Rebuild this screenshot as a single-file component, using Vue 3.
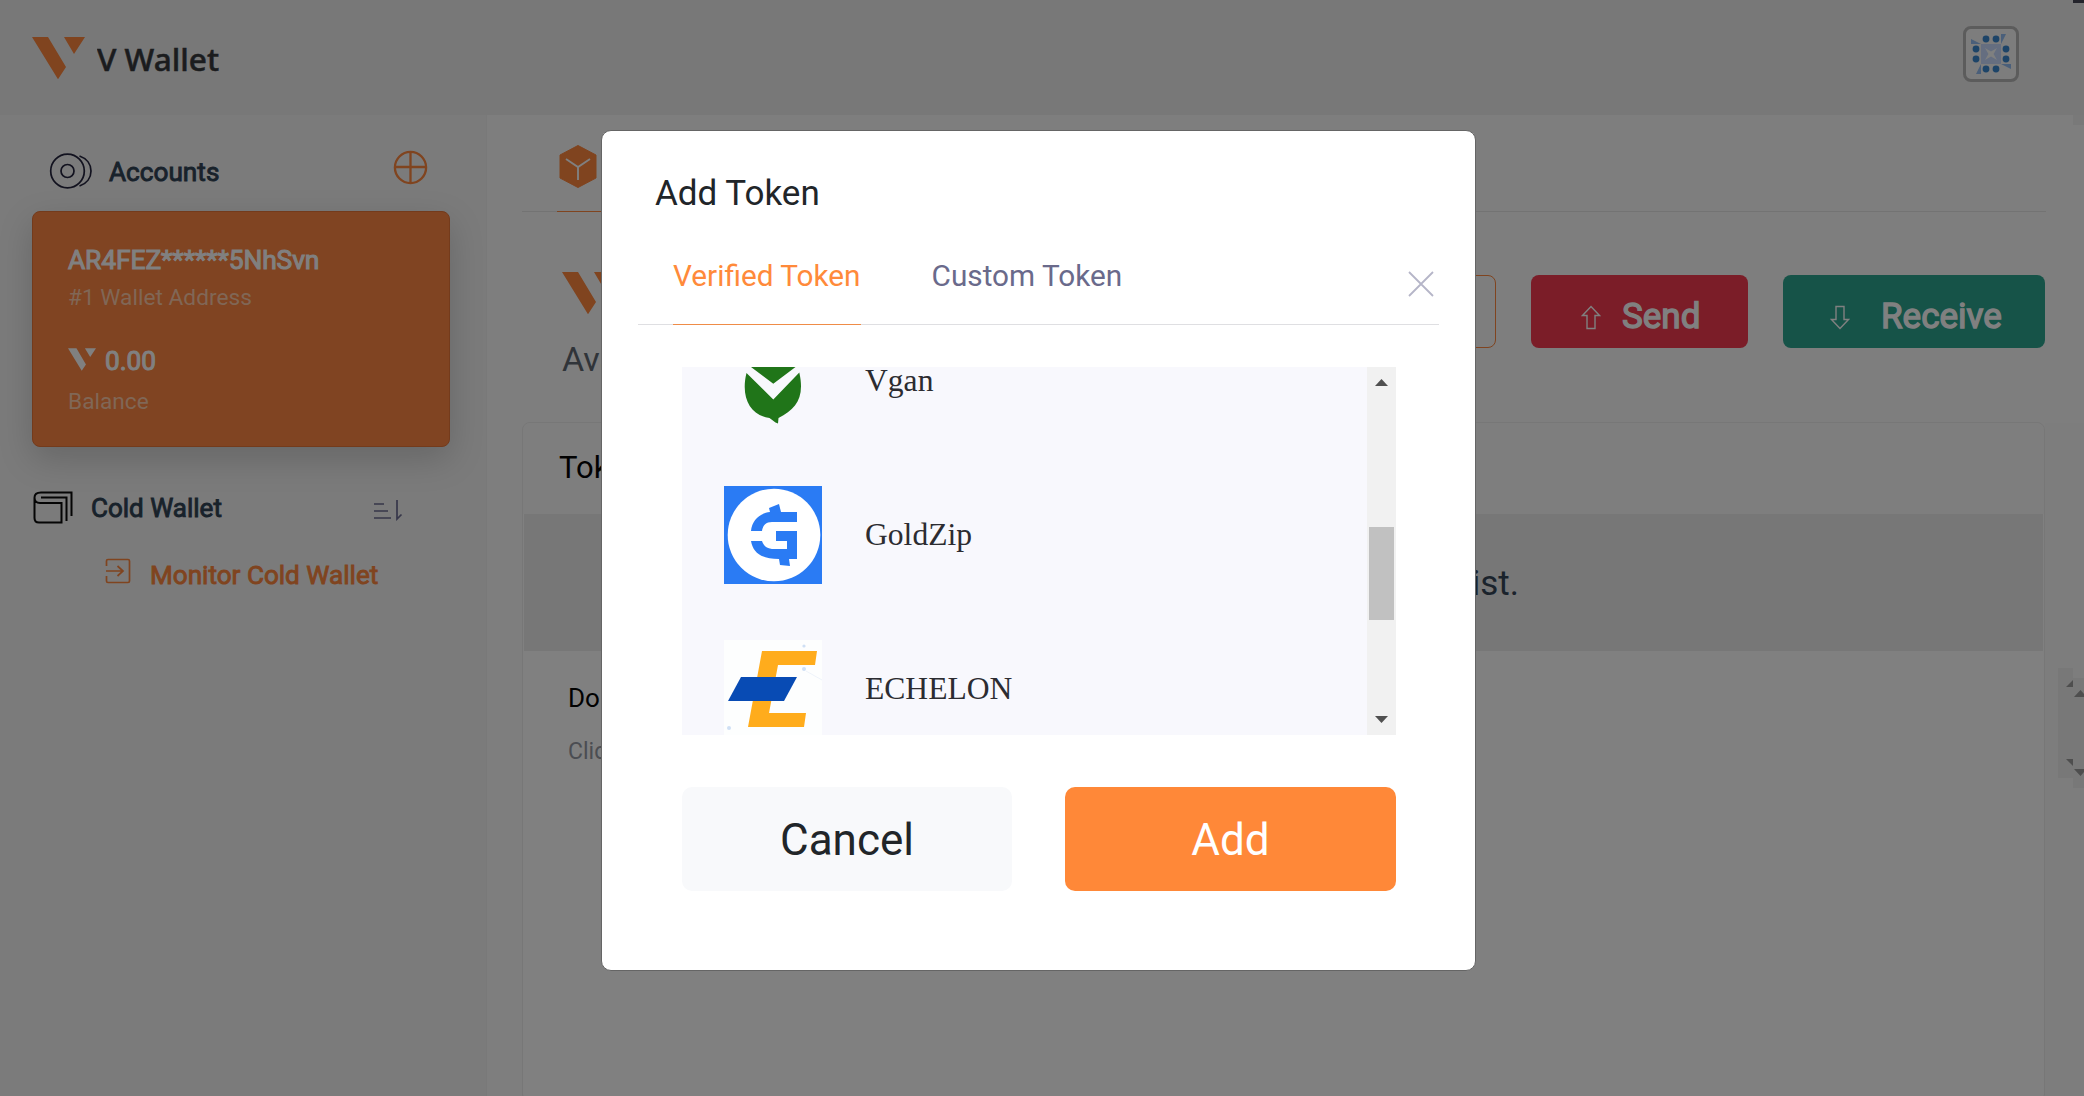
<template>
  <div class="screen">
    <header class="top">
      <div class="brand">
        <svg width="53" height="43" viewBox="0 0 53 43" fill="#80441f"><path d="M0 0H16L34 30L26 42.3ZM32 0H53L42 17Z" /></svg>
        <svg class="wordmark" width="140" height="46"><text x="0" y="34" textLength="122" lengthAdjust="spacingAndGlyphs">V Wallet</text></svg>
      </div>
      <div class="avatar">
        <svg width="40" height="40" viewBox="0 0 40 40">
          <rect x="10" y="10" width="20" height="20" fill="#656e80" />
          <path d="M14 14L20 17.4L26 14L22.6 20L26 26L20 22.6L14 26L17.4 20Z" fill="#7f8080" />
          <g fill="#1d4468">
            <circle v-for="(d, i) in dots" :key="i" :cx="d[0]" :cy="d[1]" r="3.4" />
          </g>
          <path d="M0 5L10 10H0ZM30 0H35L30 10ZM30 30H40V35ZM10 30V40H5Z" fill="#4a5f7a" />
        </svg>
      </div>
    </header>

    <div class="body">
      <aside class="side">
        <div class="accounts">
          <svg class="coin" width="44" height="37" viewBox="0 0 44 37" fill="none" stroke="#12121f" stroke-width="1.7">
            <circle cx="18.5" cy="18" r="16.8" /><circle cx="18.5" cy="18" r="6.5" />
            <path d="M30.5 3C38 5.5 42 11.5 42 18S38 30.5 30.5 33" />
          </svg>
          <span class="label">Accounts</span>
          <svg class="plus" width="35" height="35" viewBox="0 0 35 35" fill="none" stroke="#80441f" stroke-width="2.3"><circle cx="17.5" cy="17.5" r="15.6" /><path d="M17.5 2V33M2 17H33" /></svg>
        </div>
        <section class="card">
          <div class="address">AR4FEZ******5NhSvn</div>
          <div class="muted">#1 Wallet Address</div>
          <div class="amount">
            <svg width="28" height="23" viewBox="0 0 53 43" fill="#808080"><path d="M0 0H16L34 31L26 43ZM32 0H53L42 17Z" /></svg>
            <span>0.00</span>
          </div>
          <div class="muted bal">Balance</div>
        </section>
        <div class="cold">
          <svg width="40" height="34" viewBox="0 0 40 34" fill="none" stroke="#050505" stroke-width="2">
            <path d="M1.5 7V27Q1.5 31.5 6 31.5H28.5V12H7Q1.5 12 1.5 6.5Q1.5 1.5 8 1.5H38.5V25M33.5 30V6.5H8" />
          </svg>
          <span class="label">Cold Wallet</span>
          <svg class="sort" width="30" height="22" viewBox="0 0 30 22" fill="none" stroke="#37374a" stroke-width="1.7"><path d="M1 5H11M1 12H15M1 19H18M24 1V20L28.5 15.5" /></svg>
        </div>
        <div class="monitor">
          <svg width="26" height="26" viewBox="0 0 26 26" fill="none" stroke="#80441f" stroke-width="1.7"><path d="M1.5 8V3Q1.5 1.5 3 1.5H23Q24.5 1.5 24.5 3V23Q24.5 24.5 23 24.5H3Q1.5 24.5 1.5 23V18M1 13H18M12.5 8L18 13L12.5 18" /></svg>
          <span>Monitor Cold Wallet</span>
        </div>
      </aside>

      <main class="main">
        <div class="tabs">
          <div class="tab">
            <svg width="38" height="43" viewBox="0 0 38 43"><path d="M19 .5L37 10V33L19 42.5L1 33V10Z" fill="#80441f" stroke="#80441f" stroke-linejoin="round" /><path d="M7 14L19 22L31 14M19 22V35" fill="none" stroke="#808080" stroke-width="1.9" /></svg>
          </div>
        </div>
        <div class="summary">
          <div>
            <svg class="big-v" width="53" height="43" viewBox="0 0 53 43" fill="#80441f"><path d="M0 0H16L34 30L26 42.3ZM32 0H53L42 17Z" /></svg>
            <div class="available">Available</div>
          </div>
          <div class="actions">
            <div class="ghost"></div>
            <div class="action send"><svg width="20" height="25" viewBox="0 0 20 25"><path d="M10 1.5L18.5 10.5H14V23.5H6V10.5H1.5Z" /></svg><span>Send</span></div>
            <div class="action receive"><svg width="20" height="25" viewBox="0 0 20 25"><path d="M10 23.5L1.5 14.5H6V1.5H14V14.5H18.5Z" /></svg><span>Receive</span></div>
          </div>
        </div>
        <section class="tokens">
          <div class="tokens-head">Tokens</div>
          <div class="empty"><span>No tokens in the list.</span></div>
          <div class="hint">Don't see your token?</div>
          <div class="hint2">Click Add Token</div>
        </section>
      </main>
      <i class="strip"></i>
    </div>

    <i class="corner"></i>
    <i class="edge"></i>
    <svg class="ghost-scroll" width="26" height="120" viewBox="0 0 26 120">
      <path d="M0 0H15V10H26V120H15V110H0Z" fill="#787878" />
      <path d="M8 19L15 12V19ZM16 29L22.5 22L26 26V29ZM8 91H15V98ZM16 101H26V104L22.5 108Z" fill="#4e4e4e" />
    </svg>

    <div class="modal">
      <h2>Add Token</h2>
      <nav class="modal-tabs">
        <span class="on">Verified Token</span><span>Custom Token</span>
        <svg class="close" width="26" height="26" viewBox="0 0 26 26"><path d="M1 1L25 25M25 1L1 25" stroke="#b5b5c8" stroke-width="1.8" /></svg>
      </nav>
      <div class="list">
        <div class="items">
          <div class="item">
            <svg width="98" height="98" viewBox="0 0 98 98" fill="#207519">
              <path d="M23 32L49 2L75.5 32L49.3 51.7ZM22.5 41L49.3 67.5L75.3 40.5C81 66 72 77 54.5 86L54 91.5L51.5 90.5L45.5 86C26 83.500 16.500 65 22.5 41Z" />
            </svg><span>Vgan</span>
          </div>
          <div class="item">
            <svg width="98" height="98" viewBox="0 0 98 98">
              <rect width="98" height="98" fill="#2a7bf4" /><circle cx="50" cy="49" r="46.3" fill="#fff" />
              <path d="M27 45C28 34 36 27 46 26L45 22L55 18L57 26H73V36H48C42 36 39 39 38 45ZM52 45H73V73H65L66 80L56 79L55 73C38 73 29 67 27 55H38C40 61 44 63 50 63H63V55H52Z" fill="#2a7bf4" />
            </svg><span>GoldZip</span>
          </div>
          <div class="item">
            <svg width="98" height="98" viewBox="0 0 98 98">
              <rect width="98" height="98" fill="#fdfefe" />
              <path d="M38 11H93L91 25H54L45 73H82L80 87H24Z" fill="#ffac1c" />
              <path d="M17 37H73L60 61H4Z" fill="#084bb4" />
              <g fill="#cfe0f5"><circle cx="80" cy="6" r="1.6" /><circle cx="80" cy="29" r="2" /><circle cx="5" cy="88" r="2" /></g>
              <path d="M82 31L98 40" stroke="#eef3fa" />
            </svg><span>ECHELON</span>
          </div>
        </div>
        <div class="bar">
          <svg width="13" height="7" viewBox="0 0 13 7"><path d="M0 7L6.5 0L13 7Z" fill="#505050" /></svg>
          <i></i>
          <svg width="13" height="7" viewBox="0 0 13 7"><path d="M0 0L6.5 7L13 0Z" fill="#505050" /></svg>
        </div>
      </div>
      <div class="buttons"><button class="cancel">Cancel</button><button class="add">Add</button></div>
    </div>
  </div>
</template>

<script setup>
const dots = [[15, 5], [25, 5], [5, 15], [5, 25], [35, 15], [35, 25], [15, 35], [25, 35]]
</script>

<style>
body { overflow: hidden; }
</style>

<style scoped>
* { box-sizing: border-box; }
svg { display: block; flex: none; }
.screen { position: relative; width: 2084px; height: 1096px; overflow: hidden; background: #7e7e7e; font-family: Roboto, sans-serif; display: flex; flex-direction: column; }
.top { height: 115px; background: #787878; display: flex; justify-content: space-between; padding: 26px 65px 0 32px; flex: none; }
.brand { display: flex; padding-top: 11px; }
.wordmark { margin: 0 0 0 12px; }
.wordmark text { font: 500 30.500px "Noto Sans", "Open Sans", sans-serif; fill: #1b1c1e; stroke: #1b1c1e; stroke-width: .5px; }
.avatar { width: 56px; height: 56px; border: 3px solid #5c5c5c; border-radius: 8px; background: #7d7d7d; padding: 5px; }
.body { flex: 1; display: flex; min-height: 0; }
.side { width: 487px; background: #7b7b7b; border-right: 1px solid #797979; flex: none; }
.accounts { height: 96px; display: flex; padding: 37px 0 0 49px; }
.coin { margin-top: 1px; }
.label { font-size: 26.2px; line-height: 32px; color: #18222b; -webkit-text-stroke: .9px #18222b; }
.accounts .label { margin: 4px 0 0 16px; width: 284px; }
.plus { margin-top: -2px; }
.card { margin-left: 32px; width: 418px; height: 236px; border-radius: 8px; background: #804422; border: 1px solid #743b1c; box-shadow: 0 12px 34px rgba(0,0,0,.17); padding: 31px 0 0 35px; color: #808080; }
.address { font-size: 26.4px; line-height: 34px; -webkit-text-stroke: 1.1px #808080; letter-spacing: -.1px; }
.muted { font-size: 22.7px; line-height: 30px; margin-top: 6px; color: #806756; }
.amount { display: flex; margin-top: 31px; font-size: 26.2px; line-height: 34px; -webkit-text-stroke: 1.1px #808080; gap: 9px; }
.amount svg { margin-top: 4px; }
.bal { margin-top: 9px; }
.cold { display: flex; padding: 44px 0 0 33px; }
.cold .label { margin: 1px 0 0 18px; width: 282px; font-size: 26px; }
.cold .sort { margin-top: 8px; }
.monitor { display: flex; margin: 33px 0 0 105px; color: #80441f; font-size: 26.1px; line-height: 34px; gap: 19px; -webkit-text-stroke: .9px #80441f; }
.main { padding-left: 35px; width: 1559px; flex: none; }
.tabs { height: 97px; border-bottom: 1px solid #737373; padding-left: 35px; }
.tab { width: 120px; height: 97px; border-bottom: 1px solid #80441f; padding: 30px 0 0 2px; }
.summary { height: 210px; padding: 60px 1px 0 40px; display: flex; justify-content: space-between; }
.available { font-size: 34px; line-height: 40px; margin-top: 24px; color: #303439; }
.actions { display: flex; padding-top: 3px; }
.ghost { width: 200px; height: 73px; border: 1px solid #80441f; border-radius: 8px; margin-right: 35px; }
.action { height: 73px; border-radius: 8px; display: flex; color: #808080; font-size: 35px; line-height: 40px; -webkit-text-stroke: 1.4px #808080; }
.action svg { fill: none; stroke: #808080; stroke-width: 1.4; margin-top: 30px; }
.action span { margin-top: 22px; }
.send { width: 217px; background: #7b1d28; padding-left: 50px; gap: 21px; margin-right: 35px; }
.receive { width: 262px; background: #165348; padding-left: 47px; gap: 31px; }
.tokens { height: 680px; border: 1px solid #777; border-radius: 8px; background: #808080; overflow: hidden; margin-right: 1px; }
.tokens-head { height: 91px; background: #7e7e7e; padding: 24px 0 0 36px; font-size: 31px; line-height: 42px; color: #020202; }
.empty { height: 137px; margin: 0 1px; background: #777; font-size: 35px; color: #1a232c; display: flex; align-items: center; justify-content: flex-end; padding: 2px 524px 0 0; }
.hint { margin: 29px 0 0 45px; font-size: 26px; line-height: 36px; color: #020202; }
.hint2 { margin: 21px 0 0 45px; font-size: 23px; line-height: 30px; color: #4b4d52; }
.strip { width: 39px; margin-left: -1px; margin-top: 308px; background: #7d7d7d; }
.corner { position: absolute; right: 0; top: 0; width: 11px; height: 3px; background: #23232b; }
.edge { position: absolute; right: 0; top: 115px; width: 11px; height: 10px; background: #797979; }
.ghost-scroll { position: absolute; left: 2058px; top: 668px; }
.modal { position: absolute; left: 601px; top: 130px; width: 875px; height: 841px; border: 1px solid #656565; border-radius: 10px; background: #fff; }
h2 { margin: 0; padding: 42px 0 0 53px; font-size: 35px; font-weight: 400; line-height: 42px; color: #212529; }
.modal-tabs { margin: 24px 0 0 36px; width: 801px; height: 86px; border-bottom: 1px solid #dfdfe2; display: flex; padding-left: 35px; gap: 71px; font-size: 29.75px; line-height: 40px; color: #6a6a8b; }
.modal-tabs span { padding-top: 17px; height: 86px; }
.modal-tabs .on { color: #ff8a3a; border-bottom: 1px solid #ef8c48; }
.close { margin: 32px 5px 0 auto; }
.list { margin: 42px 0 0 80px; width: 714px; height: 368px; display: flex; background: #f8f8fd; overflow: hidden; }
.items { width: 685px; margin-top: -35px; flex: none; }
.item { display: flex; align-items: center; height: 98px; padding-left: 42px; margin-bottom: 56px; gap: 43px; font: 31.6px/40px "Liberation Serif", serif; color: #2c2c31; }
.bar { width: 29px; height: 368px; background: #f1f1f1; padding: 12px 2px; display: flex; flex-direction: column; align-items: center; }
.bar i { width: 25px; height: 93px; background: #c1c1c1; margin: 141px 0 96px; }
.buttons { display: flex; gap: 53px; margin: 52px 0 0 80px; }
button { width: 330px; height: 104px; border: 0; border-radius: 10px; font: 44px Roboto, sans-serif; padding: 2px 0 0; }
.cancel { background: #f8f9fb; color: #212529; }
.add { background: #ff8838; color: #fff; width: 331px; }
</style>
